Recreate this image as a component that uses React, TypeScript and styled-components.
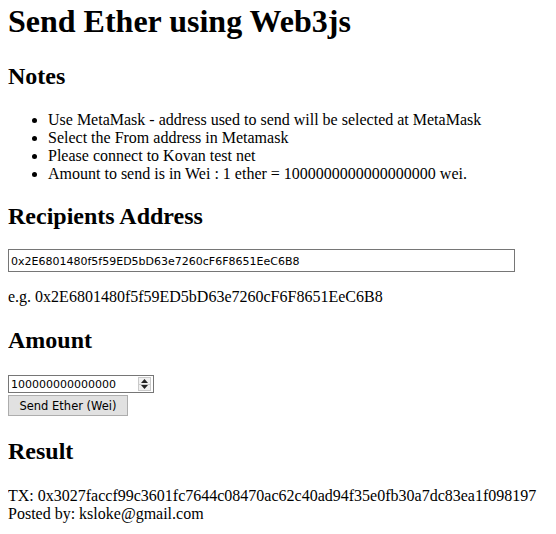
import React from "react";
import styled, { createGlobalStyle } from "styled-components";

const Global = createGlobalStyle`
  body {
    margin: 3px 8px 8px;
    font-family: "Liberation Serif", "Times New Roman", serif;
    font-size: 16px;
    color: #000;
    background: #fff;
  }
  input[type="number"]::-webkit-inner-spin-button,
  input[type="number"]::-webkit-outer-spin-button {
    -webkit-appearance: none;
    margin: 0;
  }
`;

const Page = styled.div`
  display: block;
`;

const Title = styled.h1`
  font-size: 32px;
  font-weight: bold;
  margin: 0 0 23px;
  line-height: normal;
`;

const Heading = styled.h2<{ $top?: number; $bottom?: number }>`
  font-size: 24px;
  font-weight: bold;
  margin: ${(p) => p.$top ?? 20}px 0 ${(p) => p.$bottom ?? 20}px;
  line-height: normal;
`;

const List = styled.ul`
  margin: 21px 0 16px;
  padding-left: 40px;
`;

const Item = styled.li`
  line-height: normal;
`;

const TextField = styled.input`
  display: block;
  box-sizing: border-box;
  width: 507px;
  height: 23px;
  padding: 1px 2px 0;
  border: 1px solid #767676;
  font-family: "DejaVu Sans", Tahoma, sans-serif;
  font-size: 11px;
  color: #000;
  margin: -1px 0 0;
  outline: none;
`;

const NumberWrap = styled.div`
  position: relative;
  width: 146px;
  height: 18px;
  margin-top: 21px;
`;

const NumberField = styled.input`
  display: block;
  box-sizing: border-box;
  width: 146px;
  height: 18px;
  padding: 0 2px;
  border: 1px solid #767676;
  font-family: "DejaVu Sans", Tahoma, sans-serif;
  font-size: 11px;
  color: #000;
  margin: 0;
  outline: none;
  -moz-appearance: textfield;
`;

const Spinner = styled.div`
  position: absolute;
  top: 2px;
  right: 3px;
  width: 13px;
  height: 14px;
  box-sizing: border-box;
  border: 1px solid #c9c9c9;
  background: #f0f0f0;
  display: flex;
  flex-direction: column;
`;

const SpinHalf = styled.div<{ $top?: boolean }>`
  flex: 1;
  display: flex;
  align-items: center;
  justify-content: center;
  border-top: ${(p) => (p.$top ? "none" : "1px solid #c9c9c9")};
`;

const Button = styled.button`
  display: block;
  box-sizing: border-box;
  margin: 2px 0 0;
  width: 120px;
  height: 21px;
  padding: 0 6px;
  border: 1px solid #adadad;
  background: #e1e1e1;
  font-family: "DejaVu Sans", Tahoma, sans-serif;
  font-size: 11.5px;
  color: #000;
`;

const Para = styled.p`
  margin: 16px 0;
`;

const Text = styled.div`
  line-height: normal;
`;

const Tri = ({ up }: { up?: boolean }) => (
  <svg width="7" height="4" viewBox="0 0 7 4">
    <polygon points={up ? "3.5,0 7,4 0,4" : "0,0 7,0 3.5,4"} fill="#222" />
  </svg>
);

export default function App() {
  return (
    <Page>
      <Global />
      <Title>Send Ether using Web3js</Title>
      <Heading>Notes</Heading>
      <List>
        <Item>Use MetaMask - address used to send will be selected at MetaMask</Item>
        <Item>Select the From address in Metamask</Item>
        <Item>Please connect to Kovan test net</Item>
        <Item>Amount to send is in Wei : 1 ether = 1000000000000000000 wei.</Item>
      </List>
      <Heading>Recipients Address</Heading>
      <TextField type="text" defaultValue="0x2E6801480f5f59ED5bD63e7260cF6F8651EeC6B8" />
      <Para>e.g. 0x2E6801480f5f59ED5bD63e7260cF6F8651EeC6B8</Para>
      <Heading $top={21}>Amount</Heading>
      <NumberWrap>
        <NumberField type="number" defaultValue="100000000000000" />
        <Spinner>
          <SpinHalf $top>
            <Tri up />
          </SpinHalf>
          <SpinHalf>
            <Tri />
          </SpinHalf>
        </Spinner>
      </NumberWrap>
      <Button>Send Ether (Wei)</Button>
      <Heading $top={22} $bottom={22}>Result</Heading>
      <Text>TX: 0x3027faccf99c3601fc7644c08470ac62c40ad94f35e0fb30a7dc83ea1f098197</Text>
      <Text>Posted by: ksloke@gmail.com</Text>
    </Page>
  );
}
